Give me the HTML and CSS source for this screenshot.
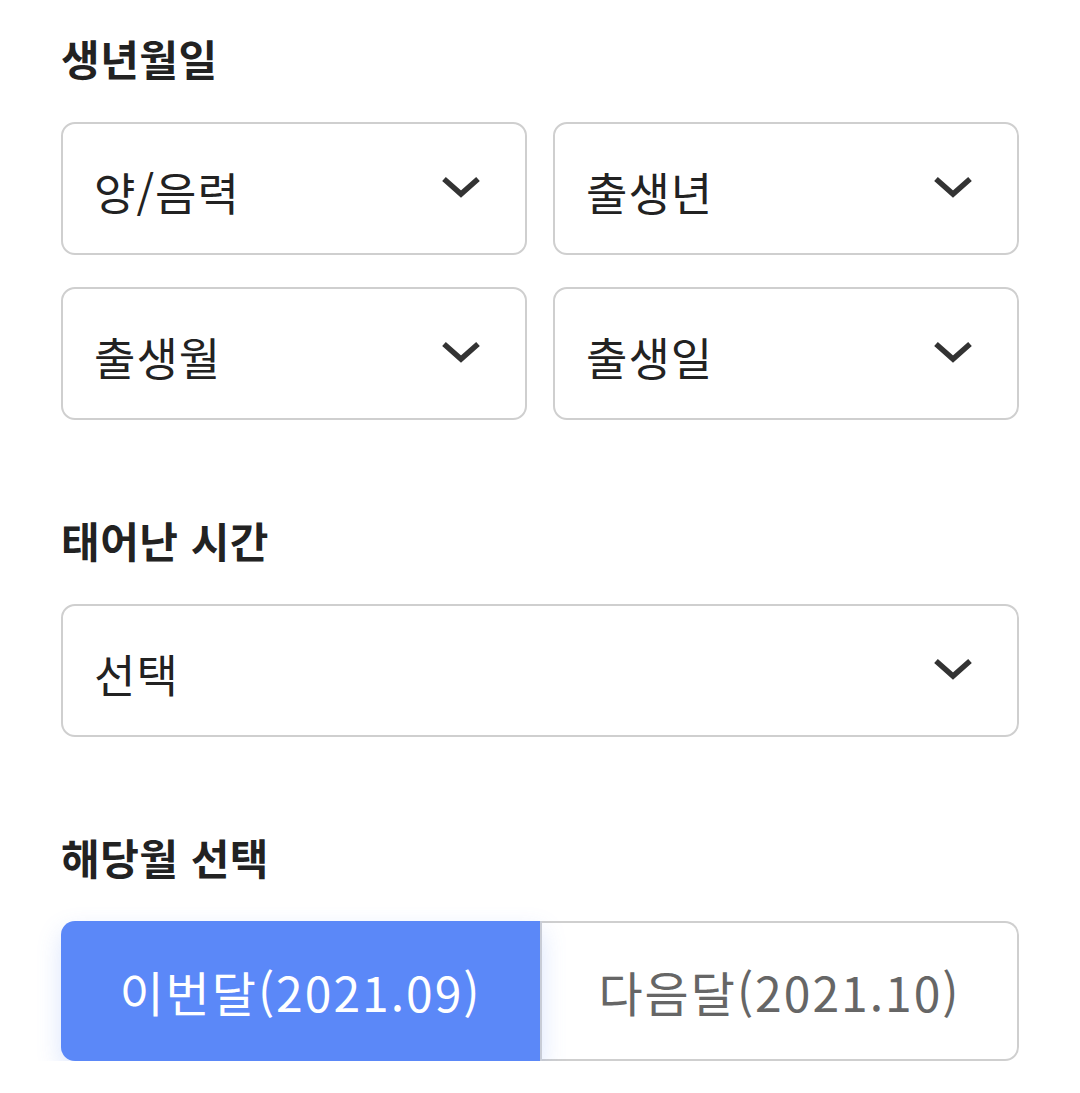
FILE: index.html
```html
<!DOCTYPE html>
<html lang="ko">
<head>
<meta charset="utf-8">
<link rel="stylesheet" href="styles.css">
</head>
<body>
<main class="form">
  <section class="section">
    <h2 class="title">생년월일</h2>
    <div class="grid">
      <div class="select"><span class="label">양/음력</span><svg class="chev" viewBox="0 0 40 22"><path d="M3 3 L20 18 L37 3"/></svg></div>
      <div class="select"><span class="label">출생년</span><svg class="chev" viewBox="0 0 40 22"><path d="M3 3 L20 18 L37 3"/></svg></div>
      <div class="select"><span class="label">출생월</span><svg class="chev" viewBox="0 0 40 22"><path d="M3 3 L20 18 L37 3"/></svg></div>
      <div class="select"><span class="label">출생일</span><svg class="chev" viewBox="0 0 40 22"><path d="M3 3 L20 18 L37 3"/></svg></div>
    </div>
  </section>
  <section class="section">
    <h2 class="title">태어난 시간</h2>
    <div class="select"><span class="label">선택</span><svg class="chev" viewBox="0 0 40 22"><path d="M3 3 L20 18 L37 3"/></svg></div>
  </section>
  <section class="section">
    <h2 class="title">해당월 선택</h2>
    <div class="toggle">
      <div class="opt active">이번달(2021.09)</div>
      <div class="opt">다음달(2021.10)</div>
    </div>
  </section>
</main>
</body>
</html>
```
FILE: styles.css
```css
* { box-sizing: border-box; }
html, body { margin: 0; padding: 0; background: #fff; }
body {
  font-family: "Noto Sans CJK KR", "Noto Sans", sans-serif;
  color: #222;
}
.form {
  width: 958px;
  margin-left: 61px;
  padding-top: 30px;
}
.section { margin-bottom: 92px; }
.section:last-child { margin-bottom: 0; }
.title {
  margin: 0 0 36px;
  font-size: 42px;
  font-weight: 700;
  line-height: 56px;
  color: #222;
  letter-spacing: 0.5px;
}
.grid {
  display: grid;
  grid-template-columns: 1fr 1fr;
  column-gap: 26px;
  row-gap: 32px;
}
.select {
  height: 133px;
  border: 2.5px solid #cfcfcf;
  border-radius: 14px;
  display: flex;
  align-items: center;
  justify-content: space-between;
  padding: 6px 44px 0 31px;
}
.label {
  font-size: 45px;
  line-height: 1;
  color: #222;
  letter-spacing: 1px;
}
.chev {
  width: 40px;
  height: 22px;
  margin-top: -10px;
}
.chev path {
  fill: none;
  stroke: #333;
  stroke-width: 5.5;
  stroke-linecap: butt;
  stroke-linejoin: miter;
}
.toggle {
  display: flex;
  height: 140px;
}
.opt {
  flex: 1;
  display: flex;
  align-items: center;
  justify-content: center;
  font-size: 48px;
  letter-spacing: 2px;
  color: #666;
  border: 2.5px solid #cfcfcf;
  border-left: 0;
  border-radius: 0 14px 14px 0;
  background: #fff;
}
.opt.active {
  flex: 0 0 481px;
  background: #5b88f8;
  color: #fff;
  border: 0;
  border-right: 2px solid #c8ccd6;
  border-radius: 14px 0 0 14px;
  box-shadow: 0 10px 24px rgba(91, 136, 248, 0.22);
  position: relative;
  z-index: 1;
}
```
